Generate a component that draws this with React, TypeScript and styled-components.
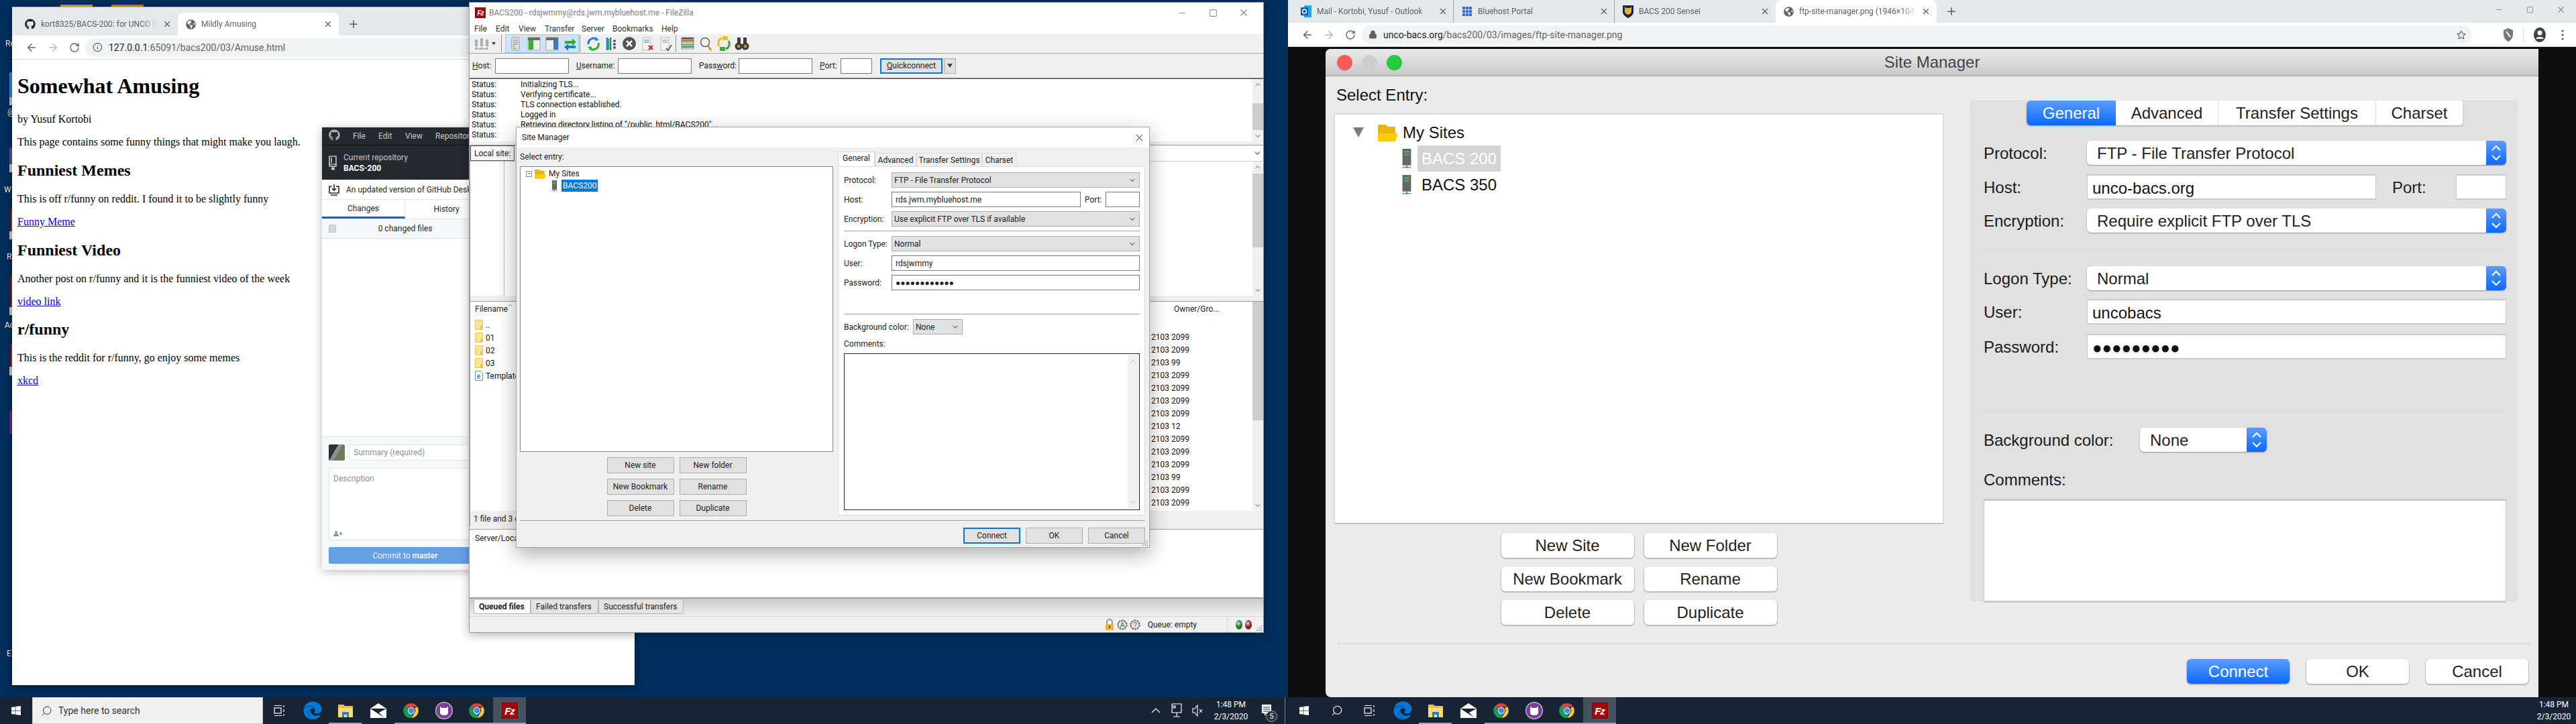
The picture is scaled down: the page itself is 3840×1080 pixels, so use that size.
import React from "react";
import styled, { createGlobalStyle } from "styled-components";
import { FaEdge, FaGithub, FaGlobeAmericas, FaWindows, FaRegStar } from "react-icons/fa";
import { ArrowLeft, ArrowRight, RotateCw, Info, Lock, Plus, X, Minus, Square, ChevronDown, ChevronUp, Search } from "lucide-react";

const UI = `"Roboto", "Liberation Sans", sans-serif`;
const MAC = `"Liberation Sans", Arial, sans-serif`;

const Global = createGlobalStyle`
  html, body { margin: 0; padding: 0; width: 3840px; height: 1080px; overflow: hidden; background: #002f5d; }
  #root { width: 3840px; height: 1080px; }
  * { box-sizing: border-box; }
`;

const Screens = styled.div`
  display: grid;
  grid-template-columns: 1920px 1920px;
  width: 3840px;
  height: 1080px;
  font-family: ${UI};
  font-size: 12px;
`;
const Monitor = styled.div`
  display: flex;
  flex-direction: column;
  height: 1080px;
  overflow: hidden;
`;
const Desktop = styled.div`
  position: relative;
  flex: 1;
  background: #002f5d;
  overflow: hidden;
`;
const DesktopGlyph = styled.div<{ $x: number; $y: number; $w: number; $h: number; $c: string }>`
  position: absolute;
  left: ${(p) => p.$x}px;
  top: ${(p) => p.$y}px;
  width: ${(p) => p.$w}px;
  height: ${(p) => p.$h}px;
  background: ${(p) => p.$c};
`;
const DesktopLabel = styled.div<{ $x: number; $y: number }>`
  position: absolute;
  left: ${(p) => p.$x}px;
  top: ${(p) => p.$y}px;
  color: #fff;
  font-size: 12px;
  line-height: 14px;
  text-shadow: 0 1px 2px #000;
`;

/* ---------- Chrome ---------- */
const FloatingWindow = styled.div<{ $x: number; $y: number; $w: number; $h: number }>`
  position: absolute;
  left: ${(p) => p.$x}px;
  top: ${(p) => p.$y}px;
  width: ${(p) => p.$w}px;
  height: ${(p) => p.$h}px;
  display: flex;
  flex-direction: column;
  overflow: hidden;
`;
const BrowserFrame = styled(FloatingWindow)`
  background: #fff;
  box-shadow: 0 2px 12px rgba(0, 0, 0, 0.45);
  border-top: 1px solid #b8bcc0;
`;
const TabStrip = styled.div<{ $h: number }>`
  display: flex;
  align-items: flex-end;
  flex: none;
  height: ${(p) => p.$h}px;
  padding-left: 7px;
  background: #e6e9ec;
`;
const BrowserTab = styled.div<{ $active?: boolean; $sep?: boolean }>`
  position: relative;
  display: flex;
  align-items: center;
  flex: none;
  width: 240px;
  height: 34px;
  padding: 0 8px 0 12px;
  gap: 8px;
  color: #5a5e63;
  font-size: 12px;
  background: ${(p) => (p.$active ? "#fff" : "transparent")};
  border-radius: ${(p) => (p.$active ? "8px 8px 0 0" : "0")};
  border-right: ${(p) => (p.$sep ? "1px solid #9da1a6" : "1px solid transparent")};
`;
const TabTitle = styled.span`
  flex: 1;
  min-width: 0;
  white-space: nowrap;
  overflow: hidden;
  -webkit-mask-image: linear-gradient(90deg, #000 88%, transparent);
  mask-image: linear-gradient(90deg, #000 88%, transparent);
`;
const TabClose = styled(X)`
  flex: none;
  width: 14px;
  height: 14px;
  color: #55595e;
`;
const NewTab = styled(Plus)`
  flex: none;
  width: 18px;
  height: 18px;
  margin: 0 0 8px 13px;
  color: #55595e;
`;
const NavBar = styled.div`
  display: flex;
  align-items: center;
  flex: none;
  height: 36px;
  padding-left: 13px;
  background: #fff;
  border-bottom: 1px solid #d4d6d8;
`;
const NavButton = styled.div<{ $off?: boolean }>`
  display: flex;
  align-items: center;
  justify-content: center;
  width: 32px;
  color: ${(p) => (p.$off ? "#b6b9bd" : "#5f6368")};
`;
const Omnibox = styled.div<{ $w: number }>`
  display: flex;
  align-items: center;
  width: ${(p) => p.$w}px;
  height: 28px;
  padding-left: 11px;
  gap: 9px;
  border-radius: 14px;
  background: #f1f3f4;
  font-size: 14px;
  color: #5f6368;
  white-space: nowrap;
`;
const UrlText = styled.span`
  flex: 1;
`;
const UrlStrong = styled.span`
  color: #202124;
`;
const OmniStar = styled(FaRegStar)`
  flex: none;
  margin-right: 9px;
`;
const NavRight = styled.div`
  display: flex;
  align-items: center;
  flex: 1;
  padding-left: 46px;
  color: #5f6368;
`;
const NavDivider = styled.div`
  flex: none;
  width: 1px;
  height: 24px;
  margin: 0 14px;
  background: #ddd;
`;
const NavDots = styled.svg`
  flex: none;
  margin-left: 22px;
`;
const PageContent = styled.div`
  flex: 1;
  padding: 0 8px;
  font-family: "Liberation Serif", "Times New Roman", serif;
  font-size: 16px;
  color: #000;
  background: #fff;
  display: flow-root;
`;
const H1 = styled.h1`
  font-size: 32px;
  margin: 21.44px 0;
`;
const H2 = styled.h2`
  font-size: 24px;
  margin: 19.92px 0;
`;
const Para = styled.p`
  margin: 16px 0;
`;
const PageLink = styled.a`
  color: #0000ee;
  text-decoration: underline;
`;

/* ---------- GitHub Desktop ---------- */
const GhFrame = styled(FloatingWindow)`
  background: #fff;
  box-shadow: 0 2px 14px rgba(0, 0, 0, 0.28);
`;
const GhTitle = styled.div`
  display: flex;
  align-items: center;
  flex: none;
  height: 27px;
  padding-left: 10px;
  background: #24292e;
  border-bottom: 1px solid #111;
  color: #c6cacf;
  white-space: nowrap;
`;
const GhMenu = styled.span<{ $w: number }>`
  flex: none;
  width: ${(p) => p.$w}px;
`;
const GhRepoBar = styled.div`
  display: flex;
  align-items: center;
  flex: none;
  height: 51px;
  padding-left: 10px;
  gap: 10px;
  background: #24292e;
  color: #fff;
`;
const GhRepoText = styled.div`
  display: flex;
  flex-direction: column;
  gap: 2px;
  line-height: 14px;
`;
const GhRepoCaption = styled.span`
  color: #c2c6cb;
`;
const GhBanner = styled.div`
  display: flex;
  align-items: center;
  flex: none;
  height: 30px;
  padding-left: 10px;
  gap: 10px;
  white-space: nowrap;
  color: #24292e;
  border-bottom: 1px solid #e1e4e8;
`;
const GhTabs = styled.div`
  display: grid;
  grid-template-columns: 124px 124px;
  flex: none;
  height: 29px;
  border-bottom: 1px solid #e1e4e8;
`;
const GhTab = styled.div<{ $active?: boolean }>`
  display: flex;
  align-items: center;
  justify-content: center;
  color: #24292e;
  border-right: 1px solid #e1e4e8;
  border-bottom: ${(p) => (p.$active ? "3px solid #0366d6" : "none")};
`;
const GhFilesRow = styled.div`
  display: flex;
  align-items: center;
  justify-content: center;
  position: relative;
  flex: none;
  height: 29px;
  background: #f6f8fa;
  color: #24292e;
  border-bottom: 1px solid #e1e4e8;
`;
const GhCheck = styled.div`
  position: absolute;
  left: 10px;
  top: 8px;
  width: 11px;
  height: 12px;
  border-radius: 2px;
  background: #d4d7da;
  border: 1px solid #bcc0c4;
`;
const GhBlank = styled.div`
  flex: 1;
`;
const GhCommit = styled.div`
  display: flex;
  flex-direction: column;
  flex: none;
  height: 199px;
  padding: 11px 10px;
  background: #f6f8fa;
  border-top: 1px solid #e1e4e8;
`;
const GhCommitTop = styled.div`
  display: flex;
  gap: 6px;
  height: 24px;
`;
const GhAvatar = styled.div`
  flex: none;
  width: 24px;
  height: 24px;
  border-radius: 2px;
  background: linear-gradient(120deg, #2b3138 0 38%, #8d8f8c 38% 55%, #6d7a5e 55% 100%);
`;
const GhSummary = styled.div`
  flex: 1;
  display: flex;
  align-items: center;
  padding-left: 6px;
  background: #fff;
  border: 1px solid #e1e4e8;
  border-radius: 3px;
  color: #8a9096;
  white-space: nowrap;
`;
const GhDescription = styled.div`
  display: flex;
  flex-direction: column;
  justify-content: space-between;
  flex: none;
  height: 108px;
  margin-top: 11px;
  padding: 8px 6px 5px;
  background: #fff;
  border: 1px solid #e1e4e8;
  border-radius: 3px;
  color: #8a9096;
`;
const GhCommitButton = styled.div`
  display: flex;
  align-items: center;
  justify-content: center;
  flex: none;
  height: 25px;
  margin-top: 10px;
  border-radius: 3px;
  background: #66a0e4;
  color: #e8f0fa;
`;

/* ---------- FileZilla ---------- */
const FzFrame = styled(FloatingWindow)`
  background: #f0f0f0;
  border: 1px solid #9a9a9a;
  box-shadow: 0 3px 14px rgba(0, 0, 0, 0.3);
`;
const FzTitle = styled.div`
  display: flex;
  align-items: center;
  flex: none;
  height: 30px;
  padding: 0 6px 0 8px;
  gap: 5px;
  background: #fff;
  color: #7d7d7d;
`;
const WindowButtons = styled.div`
  display: flex;
  margin-left: auto;
  color: #8e8e8e;
`;
const WindowButton = styled.div`
  display: flex;
  align-items: center;
  justify-content: center;
  width: 46px;
`;
const FzMenu = styled.div`
  display: flex;
  flex: none;
  height: 17px;
  padding-left: 7px;
  background: #fff;
  color: #333;
  align-items: center;
`;
const FzMenuItem = styled.span<{ $w: number }>`
  flex: none;
  width: ${(p) => p.$w}px;
`;
const FzToolbar = styled.div`
  display: flex;
  align-items: center;
  flex: none;
  height: 29px;
  padding-left: 5px;
  background: #f0f0f0;
  border-bottom: 1px solid #a0a0a0;
`;
const ToolButton = styled.div<{ $w?: number }>`
  display: flex;
  align-items: center;
  justify-content: center;
  flex: none;
  width: ${(p) => p.$w ?? 27}px;
  height: 26px;
`;
const ToggleGroup = styled.div`
  display: flex;
  flex: none;
  margin-left: 5px;
  background: #cce4f7;
  border: 1px solid #99ccee;
`;
const ToolSeparator = styled.div<{ $l: number; $r: number }>`
  flex: none;
  width: 1px;
  height: 26px;
  margin: 0 ${(p) => p.$r}px 0 ${(p) => p.$l}px;
  background: #8f8f8f;
`;
const DropArrow = styled.div`
  flex: none;
  width: 0;
  height: 0;
  border-left: 3px solid transparent;
  border-right: 3px solid transparent;
  border-top: 4px solid #333;
  margin: 0 8px 0 3px;
`;
const QuickBar = styled.div`
  display: flex;
  align-items: center;
  flex: none;
  height: 36px;
  padding-left: 4px;
  color: #222;
  font-size: 12px;
  white-space: nowrap;
`;
const QuickLabel = styled.span<{ $w: number }>`
  flex: none;
  width: ${(p) => p.$w}px;
`;
const Mnemonic = styled.span`
  text-decoration: underline;
`;
const QuickInput = styled.div<{ $w: number; $mr: number }>`
  flex: none;
  width: ${(p) => p.$w}px;
  height: 23px;
  margin-right: ${(p) => p.$mr}px;
  background: #fff;
  border: 1px solid #7a7a7a;
`;
const QuickConnect = styled.div`
  display: flex;
  align-items: center;
  justify-content: center;
  flex: none;
  width: 93px;
  height: 23px;
  background: #e1e1e1;
  border: 2px solid #0078d7;
`;
const QuickDrop = styled.div`
  display: flex;
  align-items: center;
  justify-content: center;
  flex: none;
  width: 18px;
  height: 23px;
  margin-left: 2px;
  background: #e1e1e1;
  border: 1px solid #adadad;
`;
const QuickTriangle = styled.div`
  width: 0;
  height: 0;
  border-left: 4px solid transparent;
  border-right: 4px solid transparent;
  border-top: 6px solid #444;
`;
const LogPane = styled.div`
  position: relative;
  flex: none;
  height: 95px;
  padding: 1px 0 0 3px;
  background: #fff;
  border-top: 2px solid #6d6d6d;
  color: #111;
`;
const LogRow = styled.div`
  display: flex;
  height: 15px;
  line-height: 15px;
  white-space: nowrap;
`;
const LogKey = styled.span`
  flex: none;
  width: 73px;
`;
const PaneScroll = styled.div`
  position: absolute;
  right: 0;
  top: 0;
  bottom: 0;
  width: 16px;
  display: flex;
  flex-direction: column;
  justify-content: space-between;
  align-items: center;
  padding: 2px 0;
  background: #f0f0f0;
  color: #555;
`;
const PaneThumb = styled.div<{ $t: number; $h: number }>`
  position: absolute;
  left: 0;
  right: 0;
  top: ${(p) => p.$t}px;
  height: ${(p) => p.$h}px;
  background: #cdcdcd;
`;
const Splitter = styled.div<{ $h: number }>`
  flex: none;
  height: ${(p) => p.$h}px;
  background: #f0f0f0;
  border-bottom: 1px solid #9b9b9b;
`;
const Panes = styled.div`
  display: grid;
  grid-template-columns: 590px 1fr;
  flex: none;
`;
const PaneColumn = styled.div`
  display: flex;
  flex-direction: column;
  min-width: 0;
  border-left: 1px solid #9b9b9b;
`;
const SiteBar = styled.div`
  display: flex;
  align-items: center;
  justify-content: space-between;
  flex: none;
  height: 24px;
  background: #fff;
  border-bottom: 1px solid #c9c9c9;
  color: #555;
`;
const SiteBarLabel = styled.div`
  display: flex;
  align-items: center;
  height: 100%;
  padding: 0 5px;
  border: 1px solid #5a5a5a;
  background: #f8f8f8;
  color: #222;
`;
const SiteBarChevron = styled(ChevronDown)`
  margin: 0 2px 0 auto;
`;
const TreePane = styled.div`
  position: relative;
  flex: none;
  height: 200px;
  background: #fff;
`;
const DottedLine = styled.div`
  position: absolute;
  left: 50px;
  top: 0;
  bottom: 0;
  border-left: 1px dotted #777;
`;
const ListPane = styled.div`
  position: relative;
  flex: none;
  height: 312px;
  background: #fff;
`;
const ListHeader = styled.div`
  position: relative;
  display: flex;
  align-items: center;
  height: 25px;
  padding: 0 0 3px 7px;
  color: #222;
`;
const SortMark = styled(ChevronUp)`
  position: absolute;
  left: 54px;
  top: 0;
  color: #888;
`;
const FileRow = styled.div`
  display: flex;
  align-items: center;
  height: 19px;
  padding-left: 7px;
  gap: 4px;
  white-space: nowrap;
  color: #111;
`;
const FolderIcon = styled.div`
  position: relative;
  flex: none;
  width: 12px;
  height: 15px;
  background: #fde48f;
  border: 1px solid #e9c65a;
  border-radius: 1px;
  &::after {
    content: "";
    position: absolute;
    right: 0;
    bottom: 0;
    width: 3px;
    height: 5px;
    background: #e9c65a;
  }
`;
const RemoteHeader = styled.div`
  height: 25px;
  padding: 4px 0 0 459px;
  color: #222;
  white-space: nowrap;
`;
const RemoteRow = styled.div`
  height: 19px;
  line-height: 19px;
  padding-left: 425px;
  color: #111;
  white-space: nowrap;
`;
const PaneStatus = styled.div`
  display: flex;
  align-items: center;
  flex: none;
  height: 23px;
  padding-left: 5px;
  background: #f0f0f0;
  color: #222;
  white-space: nowrap;
`;
const QueuePane = styled.div`
  flex: none;
  height: 103px;
  padding: 6px 8px;
  background: #fff;
  color: #222;
  border-bottom: 2px solid #a0a0a0;
`;
const QueueTabs = styled.div`
  display: flex;
  flex: none;
  height: 27px;
  padding: 2px 0 0 6px;
  background: linear-gradient(#c9c9c9, #f0f0f0);
  border-bottom: 1px solid #d7d7d7;
`;
const QueueTab = styled.div<{ $w: number; $active?: boolean }>`
  display: flex;
  align-items: center;
  flex: none;
  width: ${(p) => p.$w}px;
  height: 21px;
  padding-left: 7px;
  border: 1px solid #b4b4b4;
  border-top: none;
  border-radius: 0 0 3px 3px;
  background: ${(p) => (p.$active ? "#fff" : "#e4e4e4")};
  font-weight: ${(p) => (p.$active ? 700 : 400)};
  color: #222;
`;
const FzStatus = styled.div`
  display: flex;
  align-items: center;
  justify-content: flex-end;
  flex: 1;
  min-height: 0;
  padding-right: 16px;
  gap: 3px;
  color: #222;
`;
const QueueText = styled.span`
  margin-left: 8px;
`;
const StatusDivider = styled.div`
  flex: none;
  width: 1px;
  height: 22px;
  margin: 0 9px 0 42px;
  background: #d5d5d5;
`;
const Light = styled.div<{ $c: string }>`
  flex: none;
  width: 10px;
  height: 14px;
  margin-right: 1px;
  border-radius: 50%;
  background: radial-gradient(circle at 40% 35%, #ddd, ${(p) => p.$c} 45%);
`;
const Grip = styled.svg`
  position: absolute;
  right: 1px;
  bottom: 1px;
`;

/* ---------- Site Manager (Windows) ---------- */
const Dialog = styled(FloatingWindow)`
  background: #f0f0f0;
  border: 1px solid #a6a6a6;
  box-shadow: 0 10px 28px rgba(0, 0, 0, 0.32);
`;
const DialogTitle = styled.div`
  display: flex;
  align-items: center;
  justify-content: space-between;
  flex: none;
  height: 30px;
  padding: 0 6px 0 8px;
  background: #fff;
  color: #222;
`;
const DialogColumns = styled.div`
  display: flex;
  flex: none;
  height: 556px;
  padding: 0 6px 0 5px;
  gap: 7px;
`;
const EntryColumn = styled.div`
  display: flex;
  flex-direction: column;
  flex: none;
  width: 467px;
`;
const EntryLabel = styled.div`
  display: flex;
  align-items: center;
  flex: none;
  height: 28px;
  color: #222;
`;
const EntryTree = styled.div`
  flex: none;
  height: 426px;
  padding: 1px 0 0 8px;
  background: #fff;
  border: 1px solid #828790;
`;
const TreeNode = styled.div<{ $indent: number }>`
  display: flex;
  align-items: center;
  height: 18px;
  padding-left: ${(p) => p.$indent}px;
  gap: 4px;
  color: #222;
`;
const MinusBox = styled.div`
  display: flex;
  align-items: center;
  justify-content: center;
  flex: none;
  width: 9px;
  height: 9px;
  border: 1px solid #8d8d8d;
  background: #fff;
  font-size: 9px;
  line-height: 1;
`;
const NodeSelected = styled.span`
  display: flex;
  align-items: center;
  height: 18px;
  margin-left: 2px;
  padding: 0 2px;
  background: #0078d7;
  color: #fff;
`;
const EntryButtons = styled.div`
  display: grid;
  grid-template-columns: 100px 100px;
  grid-auto-rows: 24px;
  gap: 8px;
  justify-content: center;
  margin-top: 8px;
`;
const WinButton = styled.div<{ $focus?: boolean }>`
  display: flex;
  align-items: center;
  justify-content: center;
  height: 24px;
  background: #e1e1e1;
  border: ${(p) => (p.$focus ? "2px solid #0078d7" : "1px solid #adadad")};
  color: #222;
`;
const TabColumn = styled.div`
  display: flex;
  flex-direction: column;
  flex: none;
  width: 458px;
  padding-top: 6px;
`;
const WinTabs = styled.div`
  display: flex;
  align-items: flex-end;
  flex: none;
  height: 22px;
`;
const WinTab = styled.div<{ $w: number; $active?: boolean }>`
  display: flex;
  align-items: center;
  justify-content: center;
  flex: none;
  width: ${(p) => p.$w}px;
  height: ${(p) => (p.$active ? 22 : 20)}px;
  background: ${(p) => (p.$active ? "#fff" : "#f0f0f0")};
  border: 1px solid #d9d9d9;
  border-bottom: none;
  color: #222;
  ${(p) => (p.$active ? "padding-bottom: 3px;" : "")}
`;
const WinPanel = styled.div`
  flex: none;
  height: 521px;
  padding: 8px 7px 0 8px;
  background: #fff;
  border: 1px solid #d9d9d9;
`;
const FormRow = styled.div<{ $gap?: number }>`
  display: flex;
  align-items: center;
  height: 23px;
  margin-top: ${(p) => p.$gap ?? 6}px;
`;
const FormLabel = styled.span<{ $w?: number }>`
  flex: none;
  width: ${(p) => p.$w ?? 71}px;
  color: #222;
`;
const WinCombo = styled.div<{ $w?: number }>`
  display: flex;
  align-items: center;
  justify-content: space-between;
  flex: ${(p) => (p.$w ? "none" : "1")};
  ${(p) => (p.$w ? `width: ${p.$w}px;` : "")}
  height: 23px;
  padding: 0 4px 0 3px;
  background: #e1e1e1;
  border: 1px solid #adadad;
  color: #222;
`;
const WinInput = styled.div<{ $w?: number }>`
  display: flex;
  align-items: center;
  flex: ${(p) => (p.$w ? "none" : "1")};
  ${(p) => (p.$w ? `width: ${p.$w}px;` : "")}
  height: 23px;
  padding-left: 5px;
  background: #fff;
  border: 1px solid #7a7a7a;
  color: #222;
`;
const PortLabel = styled.span`
  flex: none;
  width: 31px;
  margin-left: 6px;
  color: #222;
`;
const WinRule = styled.div<{ $t: number; $b: number }>`
  height: 1px;
  margin: ${(p) => p.$t}px 0 ${(p) => p.$b}px;
  background: #a0a0a0;
`;
const CommentsLabel = styled.div`
  height: 14px;
  line-height: 14px;
  margin-top: 7px;
  color: #222;
`;
const CommentsBox = styled.div`
  position: relative;
  height: 234px;
  margin-top: 7px;
  background: #fff;
  border: 1px solid #222;
`;
const CommentScroll = styled.div`
  position: absolute;
  right: 1px;
  top: 1px;
  bottom: 1px;
  width: 16px;
  display: flex;
  flex-direction: column;
  justify-content: space-between;
  align-items: center;
  padding: 4px 0;
  background: #f0f0f0;
  color: #bbb;
`;
const DialogRule = styled.div`
  flex: none;
  height: 1px;
  margin: 0 6px 0 5px;
  background: #a0a0a0;
`;
const DialogFooter = styled.div`
  display: flex;
  justify-content: flex-end;
  flex: none;
  gap: 8px;
  padding: 10px 6px 0 0;
`;
const FooterButton = styled(WinButton)`
  width: 85px;
  height: 24px;
`;

/* ---------- Taskbar ---------- */
const TaskbarRoot = styled.div`
  display: flex;
  align-items: stretch;
  flex: none;
  height: 40px;
  background: #182434;
  color: #fff;
`;
const StartSlot = styled.div`
  display: flex;
  align-items: center;
  justify-content: center;
  flex: none;
  width: 48px;
`;
const SearchBox = styled.div`
  display: flex;
  align-items: center;
  flex: none;
  width: 344px;
  padding-left: 12px;
  gap: 9px;
  background: #f0f0f0;
  border: 1px solid #c9c9c9;
  color: #333;
  font-size: 14px;
`;
const SearchGlyph = styled(Search)`
  flex: none;
  transform: scaleX(-1);
`;
const TaskSlot = styled.div<{ $running?: boolean; $active?: boolean }>`
  display: flex;
  align-items: center;
  justify-content: center;
  flex: none;
  width: 49px;
  background: ${(p) => (p.$active ? "#46525f" : "transparent")};
  border-bottom: 2px solid ${(p) => (p.$running ? "#6cb0ec" : "transparent")};
  padding-top: 2px;
`;
const Tray = styled.div`
  display: flex;
  align-items: center;
  margin-left: auto;
`;
const TrayIcon = styled.div`
  display: flex;
  align-items: center;
  justify-content: center;
  flex: none;
  width: 31px;
`;
const Clock = styled.div<{ $w: number }>`
  display: flex;
  flex-direction: column;
  align-items: center;
  flex: none;
  width: ${(p) => p.$w}px;
  gap: 4px;
  font-size: 12px;
  line-height: 14px;
`;
const NoticeSlot = styled.div`
  position: relative;
  display: flex;
  justify-content: center;
  flex: none;
  width: 35px;
`;
const NoticeBadge = styled.div`
  position: absolute;
  left: 17px;
  top: 9px;
  width: 17px;
  height: 17px;
  line-height: 15px;
  border-radius: 50%;
  background: #2b3440;
  border: 1px solid #9da4ad;
  text-align: center;
  font-size: 11px;
`;
const ShowDesktop = styled.div`
  flex: none;
  width: 15px;
  height: 100%;
  background: linear-gradient(90deg, transparent 10px, #76808c 10px 11px, transparent 11px);
`;
const TrayEnd = styled.div`
  flex: none;
  width: 5px;
`;
const FzBadge = styled.div<{ $s: number }>`
  display: flex;
  align-items: center;
  justify-content: center;
  flex: none;
  width: ${(p) => p.$s}px;
  height: ${(p) => p.$s}px;
  background: #a00a0a;
  color: #fff;
  font-family: ${MAC};
  font-weight: 700;
  font-style: italic;
  font-size: ${(p) => Math.round(p.$s * 0.62)}px;
  letter-spacing: -1px;
  border: 1px dotted #5d0000;
`;

/* ---------- Maximised Chrome + mac picture ---------- */
const MaxBrowser = styled.div`
  display: flex;
  flex-direction: column;
  flex: 1;
  min-height: 0;
`;
const WindowControls = styled.div`
  display: flex;
  align-items: flex-start;
  margin-left: auto;
  height: 34px;
  color: #8c8f93;
`;
const WindowControl = styled.div`
  display: flex;
  align-items: center;
  justify-content: center;
  width: 46px;
  height: 28px;
`;
const ImageStage = styled.div`
  display: flex;
  justify-content: center;
  flex: 1;
  padding-top: 3px;
  background: #0e0e0e;
  min-height: 0;
`;
const MacWindow = styled.div`
  display: flex;
  flex-direction: column;
  flex: none;
  width: 1808px;
  background: #ebebeb;
  border-radius: 8px 0 0 8px;
  overflow: hidden;
  font-family: ${MAC};
  color: #222;
`;
const MacTitle = styled.div`
  position: relative;
  display: flex;
  align-items: center;
  justify-content: center;
  flex: none;
  height: 41px;
  background: linear-gradient(#ebebeb, #c9c9c9);
  border-bottom: 2px solid #b4b4b4;
  color: #444;
  font-size: 24px;
`;
const Lights = styled.div`
  position: absolute;
  left: 17px;
  top: 9px;
  display: flex;
  gap: 14px;
`;
const MacLight = styled.div<{ $c: string }>`
  width: 23px;
  height: 23px;
  border-radius: 50%;
  background: ${(p) => p.$c};
`;
const MacColumns = styled.div`
  display: flex;
  flex: none;
  height: 818px;
  padding-left: 12px;
  gap: 39px;
`;
const MacLeft = styled.div`
  display: flex;
  flex-direction: column;
  flex: none;
  width: 910px;
`;
const MacSelectLabel = styled.div`
  display: flex;
  align-items: center;
  flex: none;
  height: 55px;
  padding-left: 4px;
  font-size: 24px;
  color: #111;
`;
const MacTree = styled.div`
  flex: none;
  height: 613px;
  padding: 7px 0 0 27px;
  background: #fff;
  border: 2px solid #dcdcdc;
  border-bottom-color: #c4c4c4;
`;
const MacNode = styled.div<{ $indent: number }>`
  display: flex;
  align-items: center;
  height: 39px;
  padding-left: ${(p) => p.$indent}px;
  font-size: 24px;
  color: #111;
`;
const MacTriangle = styled.div`
  flex: none;
  width: 0;
  height: 0;
  margin-right: 21px;
  border-left: 8px solid transparent;
  border-right: 8px solid transparent;
  border-top: 15px solid #7c7c7c;
`;
const MacSelected = styled.div`
  display: flex;
  align-items: center;
  height: 39px;
  margin-left: 8px;
  padding: 0 6px;
  background: #d4d4d4;
  color: #fff;
`;
const MacPlain = styled.div`
  display: flex;
  align-items: center;
  padding: 0 7px;
`;
const MacPlainIndented = styled(MacPlain)`
  margin-left: 7px;
`;
const MacButtons = styled.div`
  display: grid;
  grid-template-columns: 198px 198px;
  grid-auto-rows: 37px;
  column-gap: 15px;
  row-gap: 13px;
  justify-content: center;
  margin-top: 13px;
`;
const MacButton = styled.div<{ $w?: number; $primary?: boolean }>`
  display: flex;
  align-items: center;
  justify-content: center;
  ${(p) => (p.$w ? `width: ${p.$w}px;` : "")}
  height: 37px;
  font-size: 24px;
  border-radius: 6px;
  background: ${(p) => (p.$primary ? "linear-gradient(#5c9cff, #0a69ff)" : "#fff")};
  color: ${(p) => (p.$primary ? "#fff" : "#222")};
  box-shadow: 0 1px 1px 1px rgba(0, 0, 0, 0.2);
`;
const MacRight = styled.div`
  flex: none;
  width: 816px;
  padding-top: 54px;
`;
const MacPanel = styled.div`
  height: 747px;
  padding: 0 17px 0 20px;
  background: #e1e1e1;
  border-radius: 6px;
  box-shadow: inset 0 0 0 1px #dcdcdc;
`;
const MacTabs = styled.div`
  position: relative;
  display: flex;
  width: 651px;
  height: 37px;
  margin: -18px auto 0;
  font-size: 24px;
  background: #fff;
  border-radius: 6px;
  box-shadow: 0 1px 2px rgba(0, 0, 0, 0.3);
  overflow: hidden;
`;
const MacTab = styled.div<{ $w: number; $active?: boolean }>`
  display: flex;
  align-items: center;
  justify-content: center;
  flex: none;
  width: ${(p) => p.$w}px;
  background: ${(p) => (p.$active ? "linear-gradient(#5c9cff, #0a69ff)" : "#fff")};
  color: ${(p) => (p.$active ? "#fff" : "#222")};
  border-right: ${(p) => (p.$active ? "none" : "1px solid #dcdcdc")};
`;
const MacRow = styled.div<{ $top: number; $h: number }>`
  display: flex;
  align-items: center;
  height: ${(p) => p.$h}px;
  margin-top: ${(p) => p.$top}px;
  font-size: 24px;
`;
const MacLabel = styled.span<{ $w?: number }>`
  flex: none;
  width: ${(p) => p.$w ?? 154}px;
  padding-top: 2px;
  color: #1a1a1a;
`;
const MacSelect = styled.div<{ $w?: number }>`
  position: relative;
  display: flex;
  align-items: center;
  flex: ${(p) => (p.$w ? "none" : "1")};
  ${(p) => (p.$w ? `width: ${p.$w}px;` : "")}
  height: 36px;
  padding: 2px 0 0 15px;
  background: #fff;
  border-radius: 6px;
  box-shadow: 0 1px 2px rgba(0, 0, 0, 0.35);
  overflow: hidden;
`;
const MacStepper = styled.div`
  position: absolute;
  right: 0;
  top: 0;
  bottom: 0;
  width: 30px;
  display: flex;
  align-items: center;
  justify-content: center;
  background: linear-gradient(#5c9cff, #0a69ff);
`;
const MacInput = styled.div<{ $w?: number }>`
  display: flex;
  align-items: center;
  flex: ${(p) => (p.$w ? "none" : "1")};
  ${(p) => (p.$w ? `width: ${p.$w}px;` : "")}
  height: 38px;
  padding: 3px 0 0 7px;
  background: #fff;
  border: 2px solid #cbcbcb;
  border-left-width: 1px;
  border-right-width: 1px;
  font-size: 24px;
  color: #111;
`;
const MacPortLabel = styled.span`
  flex: none;
  width: 95px;
  margin-left: 24px;
  padding-top: 2px;
`;
const MacRule = styled.div<{ $top: number }>`
  height: 4px;
  margin: ${(p) => p.$top}px 3px 0 1px;
  background: #dbdbdb;
`;
const MacTextArea = styled.div`
  height: 155px;
  margin-top: 15px;
  background: #fff;
  border: 2px solid #cbcbcb;
  border-width: 3px 1px;
`;
const MacFooterRule = styled.div`
  flex: none;
  height: 4px;
  margin: 26px 12px 0 17px;
  background: #e2e2e2;
`;
const MacFooter = styled.div`
  display: flex;
  justify-content: flex-end;
  flex: none;
  gap: 25px;
  margin-top: 21px;
  padding-right: 15px;
`;

/* ---------- Drawn icons ---------- */
const ChromeLogo = ({ s = 26 }: { s?: number }) => (
  <svg width={s} height={s} viewBox="0 0 48 48">
    <path d="M24 4a20 20 0 0 1 17.3 10H24a10 10 0 0 0-9.5 7L8 10.2A20 20 0 0 1 24 4z" fill="#db4437" />
    <path d="M41.3 14A20 20 0 0 1 25 44l8.3-14.5A10 10 0 0 0 33 17z" fill="#fcc934" />
    <path d="M25 44A20 20 0 0 1 8 10.2l8.2 14.4A10 10 0 0 0 27.5 33.4z" fill="#0f9d58" />
    <circle cx="24" cy="24" r="8.5" fill="#4285f4" stroke="#fff" strokeWidth="2" />
  </svg>
);
const ExplorerLogo = () => (
  <svg width="24" height="24" viewBox="0 0 24 24">
    <path d="M1 3h8l2 2h12v17H1z" fill="#f2bc3d" />
    <path d="M1 8h22v14H1z" fill="#fbdc76" />
    <path d="M7 14h10v8h-3v-4h-4v4H7z" fill="#2a7fd1" />
  </svg>
);
const MailLogo = () => (
  <svg width="26" height="26" viewBox="0 0 26 26">
    <path d="M1 10 13 2l12 8v14H1z" fill="#fff" />
    <path d="M1 10l24 0-11 6 7 7z" fill="#182434" />
  </svg>
);
const GhDesktopLogo = () => (
  <svg width="26" height="26" viewBox="0 0 26 26">
    <circle cx="13" cy="13" r="12.4" fill="#7d3c98" stroke="#c9c9d2" strokeWidth="1.2" />
    <path d="M7 7l3 2h6l3-2v9c0 3-3 4-6 4s-6-1-6-4z" fill="#fff" />
  </svg>
);
const TaskViewGlyph = () => (
  <svg width="18" height="18" viewBox="0 0 18 18" fill="none" stroke="#fff" strokeWidth="1.2">
    <path d="M1 1.5h11M1 16.5h11" />
    <rect x="1" y="5" width="10" height="8" />
    <path d="M15 1v3M15 7v4M15 14v3" />
  </svg>
);
const ServerGlyph = ({ w, h }: { w: number; h: number }) => (
  <svg width={w} height={h} viewBox="0 0 14 28">
    <rect x="1" y="0" width="12" height="23" fill="#666" />
    <rect x="3.5" y="3" width="7" height="2" fill="#4bbb55" />
    <rect x="3.5" y="7" width="7" height="2" fill="#4bbb55" />
    <rect x="6" y="23" width="2" height="4" fill="#888" />
    <rect x="1" y="25" width="12" height="1.5" fill="#3b97e0" />
  </svg>
);
const FolderGlyph = ({ w, h }: { w: number; h: number }) => (
  <svg width={w} height={h} viewBox="0 0 30 26">
    <path d="M0 1h12l3 3h11v20H0z" fill="#e9b60b" />
    <path d="M0 14h30l-4 12H0z" fill="#ffcc0d" />
  </svg>
);
const HtmlDocGlyph = () => (
  <svg width="12" height="15" viewBox="0 0 12 15">
    <path d="M0.5 0.5h8l3 3v11h-11z" fill="#fff" stroke="#7f8a99" />
    <text x="5.5" y="11.5" textAnchor="middle" fontSize="10" fontWeight="700" fontFamily="Liberation Sans" fill="#1a7fd6">e</text>
  </svg>
);
const Stepper = () => (
  <svg width="16" height="28" viewBox="0 0 16 28" fill="none" stroke="#fff" strokeWidth="2">
    <path d="M2 10l6-6 6 6M2 18l6 6 6-6" />
  </svg>
);
const Octo = ({ s, c }: { s: number; c: string }) => <FaGithub size={s} color={c} />;

const GripDots = () => (
  <Grip width="10" height="10" viewBox="0 0 10 10" fill="#b4b4b4">
    <rect x="7" y="1" width="2" height="2" />
    <rect x="4" y="4" width="2" height="2" />
    <rect x="7" y="4" width="2" height="2" />
    <rect x="1" y="7" width="2" height="2" />
    <rect x="4" y="7" width="2" height="2" />
    <rect x="7" y="7" width="2" height="2" />
  </Grip>
);

const tb = { width: 22, height: 24, viewBox: "0 0 22 24" };
const TSite = () => (
  <svg {...tb}>
    <path d="M1 20h20M3 20v-3M11 20v-3M19 20v-3" stroke="#777" />
    <rect x="1" y="6" width="4" height="10" fill="#9cb3c4" />
    <rect x="9" y="4" width="4" height="12" fill="#aab9a6" />
    <rect x="17" y="6" width="4" height="10" fill="#9cb3c4" />
  </svg>
);
const TLog = () => (
  <svg {...tb}>
    <rect x="6" y="3" width="11" height="19" rx="1" fill="#e4e4e4" stroke="#999" />
    <path d="M8 7h7M8 10h7M8 13h7" stroke="#6a7b6a" />
    <path d="M8 16h3M8 19h5" stroke="#3cab3c" />
  </svg>
);
const TPane = ({ a, l }: { a: string; l: boolean }) => (
  <svg {...tb}>
    <rect x="3" y="3" width="18" height="19" fill="#eef1ee" stroke="#aaa" />
    <rect x="3" y="3" width="18" height="4" fill="#6a6a6a" />
    <rect x={l ? 4 : 14} y="7" width="7" height="14" fill={a} />
  </svg>
);
const TArrows = () => (
  <svg {...tb}>
    <path d="M4 8h11V4l6 6-6 5v-3H4z" fill="#29b32c" />
    <path d="M20 15H9v-3l-6 5 6 6v-4h11z" fill="#1f7dd1" />
  </svg>
);
const TReload = () => (
  <svg {...tb} fill="none" strokeWidth="3">
    <path d="M4 13A8 8 0 0 1 17 6" stroke="#2a7fd1" />
    <path d="M19 11A8 8 0 0 1 6 19" stroke="#29b32c" />
    <path d="M15 2l5 5-6 1z" fill="#2a7fd1" />
    <path d="M8 22l-5-5 6-1z" fill="#29b32c" />
  </svg>
);
const TFilter = () => (
  <svg {...tb}>
    <path d="M5 3v19M10 3v19" stroke="#1f7dd1" strokeWidth="2.5" />
    <path d="M7 5v16" stroke="#29b32c" strokeWidth="2" />
    <circle cx="16" cy="8" r="2" fill="#555" />
    <circle cx="16" cy="13" r="2" fill="#555" />
    <circle cx="16" cy="18" r="2" fill="#555" />
  </svg>
);
const TCancel = () => (
  <svg {...tb}>
    <circle cx="11" cy="12" r="10" fill="#555" />
    <path d="M7 8l8 8M15 8l-8 8" stroke="#fff" strokeWidth="2.5" />
  </svg>
);
const TDoc = ({ red }: { red: boolean }) => (
  <svg {...tb}>
    <rect x="4" y="3" width="12" height="19" fill="#f5f5f5" stroke="#bbb" />
    <path d="M6 7h8M6 10h8" stroke={red ? "#2a7fd1" : "#888"} />
    {red ? (
      <path d="M13 15l6 6M19 15l-6 6" stroke="#c4231c" strokeWidth="2" />
    ) : (
      <path d="M12 19l3 3 5-8" stroke="#666" strokeWidth="2" fill="none" />
    )}
  </svg>
);
const TTable = () => (
  <svg {...tb}>
    <rect x="2" y="3" width="18" height="3" fill="#555" />
    <path d="M2 8h18" stroke="#d23a2f" strokeWidth="2" />
    <path d="M2 11h18" stroke="#e0a82e" strokeWidth="2" />
    <path d="M2 14h18" stroke="#3cab3c" strokeWidth="2" />
    <path d="M2 17h18" stroke="#1f7dd1" strokeWidth="2" />
    <rect x="2" y="3" width="18" height="17" fill="none" stroke="#888" />
  </svg>
);
const TSearch = () => (
  <svg {...tb} fill="none">
    <circle cx="10" cy="10" r="6.5" stroke="#666" strokeWidth="1.5" />
    <path d="M14 15l5 7" stroke="#d9862a" strokeWidth="2.5" />
  </svg>
);
const TSync = () => (
  <svg {...tb} fill="none" strokeWidth="3">
    <path d="M4 16a8 8 0 0 1 4-12" stroke="#e8c21e" />
    <path d="M18 8a8 8 0 0 1-4 12" stroke="#3cab3c" />
    <rect x="9" y="1" width="8" height="6" fill="#e8c21e" stroke="none" />
    <rect x="5" y="17" width="8" height="6" fill="#3cab3c" stroke="none" />
  </svg>
);
const TBinoc = () => (
  <svg {...tb}>
    <rect x="4" y="3" width="5" height="8" fill="#3a3a3a" />
    <rect x="13" y="3" width="5" height="8" fill="#3a3a3a" />
    <circle cx="6" cy="16" r="5.5" fill="#3a3a3a" />
    <circle cx="16" cy="16" r="5.5" fill="#3a3a3a" />
    <circle cx="6" cy="16" r="2.5" fill="#b98d2f" />
    <circle cx="16" cy="16" r="2.5" fill="#b98d2f" />
  </svg>
);
const OutlookIcon = () => (
  <svg width="16" height="18" viewBox="0 0 16 18">
    <rect x="5" y="0" width="11" height="18" fill="#28a8ea" />
    <rect x="0" y="3" width="11" height="12" fill="#0a5fb0" />
    <circle cx="5.5" cy="9" r="3" fill="none" stroke="#fff" strokeWidth="1.5" />
  </svg>
);
const GridIcon = () => (
  <svg width="16" height="16" viewBox="0 0 16 16" fill="#2d6cdf">
    {[0, 1, 2].flatMap((r) =>
      [0, 1, 2].map((c) => <rect key={`${r}${c}`} x={1 + c * 5} y={1 + r * 5} width="4" height="4" />)
    )}
  </svg>
);
const SenseiIcon = () => (
  <svg width="16" height="20" viewBox="0 0 16 20">
    <path d="M0 1h16v10c0 4-4 7-8 9-4-2-8-5-8-9z" fill="#13294b" />
    <path d="M3 3l2 2h6l2-2v7c0 2-2 4-5 5-3-1-5-3-5-5z" fill="#e8b32a" />
  </svg>
);
const LockGlyph = () => (
  <svg width="16" height="17" viewBox="0 0 16 17">
    <path d="M4 8V5a4 4 0 0 1 8 0v3" fill="none" stroke="#999" strokeWidth="2" />
    <rect x="2" y="8" width="12" height="9" rx="1" fill="#f0b429" />
    <rect x="7" y="10" width="2" height="4" fill="#7a5a00" />
  </svg>
);
const GearGlyph = ({ t }: { t: string }) => (
  <svg width="16" height="16" viewBox="0 0 16 16">
    <circle cx="8" cy="8" r="6.5" fill="#e8e8e8" stroke="#666" strokeWidth="2" strokeDasharray="3 1" />
    <text x="8" y="11.5" textAnchor="middle" fontSize="10" fontFamily="Liberation Sans" fill={t === "A" ? "#2a8a2a" : "#666"}>
      {t}
    </text>
  </svg>
);

/* ---------- Sub-assemblies ---------- */
const TaskIcons = () => (
  <>
    <TaskSlot><FaEdge size={28} color="#0078d7" /></TaskSlot>
    <TaskSlot $running><ExplorerLogo /></TaskSlot>
    <TaskSlot><MailLogo /></TaskSlot>
    <TaskSlot $running><ChromeLogo /></TaskSlot>
    <TaskSlot $running><GhDesktopLogo /></TaskSlot>
    <TaskSlot $running><ChromeLogo /></TaskSlot>
    <TaskSlot $running $active><FzBadge $s={24}>Fz</FzBadge></TaskSlot>
  </>
);
const desktopBits = [
  { x: 90, y: 7, w: 48, h: 3, c: "#e0b400" },
  { x: 166, y: 7, w: 48, h: 3, c: "#e08a10" },
  { x: 14, y: 108, w: 4, h: 37, c: "#2f86e4" },
  { x: 14, y: 145, w: 4, h: 12, c: "#c8c8c8" },
  { x: 14, y: 220, w: 4, h: 32, c: "#54509a" },
  { x: 14, y: 245, w: 4, h: 12, c: "#d0d0d0" },
  { x: 16, y: 312, w: 2, h: 33, c: "#c2201c" },
  { x: 14, y: 345, w: 4, h: 12, c: "#d0d0d0" },
  { x: 16, y: 412, w: 2, h: 46, c: "#c2201c" },
  { x: 14, y: 458, w: 4, h: 12, c: "#d0d0d0" },
  { x: 16, y: 513, w: 2, h: 34, c: "#c2201c" },
  { x: 14, y: 547, w: 4, h: 13, c: "#d0d0d0" },
  { x: 14, y: 613, w: 4, h: 34, c: "#6a2a7a" }
];
const desktopLabels = [
  { x: 8, y: 58, t: "Re" },
  { x: 11, y: 160, t: "@" },
  { x: 6, y: 276, t: "W" },
  { x: 10, y: 376, t: "R" },
  { x: 7, y: 478, t: "Ad" },
  { x: 10, y: 968, t: "E" }
];
const logLines = [
  "Initializing TLS...",
  "Verifying certificate...",
  "TLS connection established.",
  "Logged in",
  'Retrieving directory listing of "/public_html/BACS200"...',
  ""
];
const groups = ["2099", "2099", "99", "2099", "2099", "2099", "2099", "12", "2099", "2099", "2099", "99", "2099", "2099"];

export default function App() {
  return (
    <>
      <Global />
      <Screens>
        <Monitor>
          <Desktop>
            {desktopBits.map((b, i) => (
              <DesktopGlyph key={i} $x={b.x} $y={b.y} $w={b.w} $h={b.h} $c={b.c} />
            ))}
            {desktopLabels.map((l) => (
              <DesktopLabel key={l.t} $x={l.x} $y={l.y}>{l.t}</DesktopLabel>
            ))}

            <BrowserFrame $x={18} $y={10} $w={928} $h={1012}>
              <TabStrip $h={42}>
                <BrowserTab>
                  <Octo s={16} c="#222" />
                  <TabTitle>kort8325/BACS-200: for UNCO BACS 200</TabTitle>
                  <TabClose />
                </BrowserTab>
                <BrowserTab $active>
                  <FaGlobeAmericas size={15} color="#5f6368" />
                  <TabTitle>Mildly Amusing</TabTitle>
                  <TabClose />
                </BrowserTab>
                <NewTab />
              </TabStrip>
              <NavBar>
                <NavButton><ArrowLeft size={18} /></NavButton>
                <NavButton $off><ArrowRight size={18} /></NavButton>
                <NavButton><RotateCw size={16} /></NavButton>
                <Omnibox $w={800}>
                  <Info size={15} />
                  <UrlText><UrlStrong>127.0.0.1</UrlStrong>:65091/bacs200/03/Amuse.html</UrlText>
                </Omnibox>
              </NavBar>
              <PageContent>
                <H1>Somewhat Amusing</H1>
                <Para>by Yusuf Kortobi</Para>
                <Para>This page contains some funny things that might make you laugh.</Para>
                <H2>Funniest Memes</H2>
                <Para>This is off r/funny on reddit. I found it to be slightly funny</Para>
                <Para><PageLink href="#">Funny Meme</PageLink></Para>
                <H2>Funniest Video</H2>
                <Para>Another post on r/funny and it is the funniest video of the week</Para>
                <Para><PageLink href="#">video link</PageLink></Para>
                <H2>r/funny</H2>
                <Para>This is the reddit for r/funny, go enjoy some memes</Para>
                <Para><PageLink href="#">xkcd</PageLink></Para>
              </PageContent>
            </BrowserFrame>

            <GhFrame $x={480} $y={190} $w={248} $h={660}>
              <GhTitle>
                <GhMenu $w={36}><Octo s={17} c="#a7abb0" /></GhMenu>
                <GhMenu $w={38}>File</GhMenu>
                <GhMenu $w={40}>Edit</GhMenu>
                <GhMenu $w={45}>View</GhMenu>
                <GhMenu $w={70}>Repository</GhMenu>
              </GhTitle>
              <GhRepoBar>
                <svg width="12" height="22" viewBox="0 0 12 22" fill="none" stroke="#fff" strokeWidth="1.2">
                  <path d="M1 1h10v15H1zM1 13h10M4 3v8M5 16v5l1.5-1.5L8 21v-5" />
                </svg>
                <GhRepoText>
                  <GhRepoCaption>Current repository</GhRepoCaption>
                  <strong>BACS-200</strong>
                </GhRepoText>
              </GhRepoBar>
              <GhBanner>
                <svg width="16" height="18" viewBox="0 0 16 18" fill="none" stroke="#24292e" strokeWidth="1.6">
                  <path d="M5 4H1v10h14V4h-4M8 1v9M5 7l3 3 3-3M3 17h10" />
                </svg>
                An updated version of GitHub Desktop
              </GhBanner>
              <GhTabs>
                <GhTab $active>Changes</GhTab>
                <GhTab>History</GhTab>
              </GhTabs>
              <GhFilesRow>
                <GhCheck />
                0 changed files
              </GhFilesRow>
              <GhBlank />
              <GhCommit>
                <GhCommitTop>
                  <GhAvatar />
                  <GhSummary>Summary (required)</GhSummary>
                </GhCommitTop>
                <GhDescription>
                  Description
                  <svg width="13" height="8" viewBox="0 0 13 8" fill="#8a9096">
                    <circle cx="4" cy="2" r="2" />
                    <path d="M0 8c0-3 2-4 4-4s4 1 4 4zM9 3h1.5V1.5H12V3h1v1.5h-1V6h-1.5V4.5H9z" />
                  </svg>
                </GhDescription>
                <GhCommitButton><span>Commit to <b>master</b></span></GhCommitButton>
              </GhCommit>
            </GhFrame>

            <FzFrame $x={699} $y={3} $w={1185} $h={941}>
              <FzTitle>
                <FzBadge $s={16}>Fz</FzBadge>
                BACS200 - rdsjwmmy@rds.jwm.mybluehost.me - FileZilla
                <WindowButtons>
                  <WindowButton><Minus size={13} /></WindowButton>
                  <WindowButton><Square size={13} /></WindowButton>
                  <WindowButton><X size={16} /></WindowButton>
                </WindowButtons>
              </FzTitle>
              <FzMenu>
                <FzMenuItem $w={32}>File</FzMenuItem>
                <FzMenuItem $w={34}>Edit</FzMenuItem>
                <FzMenuItem $w={39}>View</FzMenuItem>
                <FzMenuItem $w={55}>Transfer</FzMenuItem>
                <FzMenuItem $w={46}>Server</FzMenuItem>
                <FzMenuItem $w={73}>Bookmarks</FzMenuItem>
                <FzMenuItem $w={40}>Help</FzMenuItem>
              </FzMenu>
              <FzToolbar>
                <ToolButton $w={25}><TSite /></ToolButton>
                <DropArrow />
                <ToolSeparator $l={0} $r={0} />
                <ToggleGroup>
                  <ToolButton><TLog /></ToolButton>
                  <ToolButton><TPane a="#3cab3c" l /></ToolButton>
                  <ToolButton><TPane a="#2a7fd1" l={false} /></ToolButton>
                  <ToolButton><TArrows /></ToolButton>
                </ToggleGroup>
                <ToolSeparator $l={1} $r={5} />
                <ToolButton><TReload /></ToolButton>
                <ToolButton><TFilter /></ToolButton>
                <ToolButton><TCancel /></ToolButton>
                <ToolButton><TDoc red /></ToolButton>
                <ToolButton><TDoc red={false} /></ToolButton>
                <ToolSeparator $l={2} $r={3} />
                <ToolButton><TTable /></ToolButton>
                <ToolButton><TSearch /></ToolButton>
                <ToolButton><TSync /></ToolButton>
                <ToolButton><TBinoc /></ToolButton>
              </FzToolbar>
              <QuickBar>
                <QuickLabel $w={34}><Mnemonic>H</Mnemonic>ost:</QuickLabel>
                <QuickInput $w={110} $mr={11} />
                <QuickLabel $w={62}><Mnemonic>U</Mnemonic>sername:</QuickLabel>
                <QuickInput $w={110} $mr={11} />
                <QuickLabel $w={59}>Pass<Mnemonic>w</Mnemonic>ord:</QuickLabel>
                <QuickInput $w={110} $mr={11} />
                <QuickLabel $w={31}><Mnemonic>P</Mnemonic>ort:</QuickLabel>
                <QuickInput $w={47} $mr={12} />
                <QuickConnect><span><Mnemonic>Q</Mnemonic>uickconnect</span></QuickConnect>
                <QuickDrop><QuickTriangle /></QuickDrop>
              </QuickBar>
              <LogPane>
                {logLines.map((l, i) => (
                  <LogRow key={i}><LogKey>Status:</LogKey>{l}</LogRow>
                ))}
                <PaneScroll>
                  <PaneThumb $t={36} $h={40} />
                  <ChevronUp size={12} />
                  <ChevronDown size={12} />
                </PaneScroll>
              </LogPane>
              <Splitter $h={6} />
              <Panes>
                <PaneColumn>
                  <SiteBar><SiteBarLabel>Local site:</SiteBarLabel></SiteBar>
                  <TreePane><DottedLine /></TreePane>
                  <Splitter $h={9} />
                  <ListPane>
                    <ListHeader>Filename<SortMark size={11} /></ListHeader>
                    <FileRow><FolderIcon />..</FileRow>
                    <FileRow><FolderIcon />01</FileRow>
                    <FileRow><FolderIcon />02</FileRow>
                    <FileRow><FolderIcon />03</FileRow>
                    <FileRow><HtmlDocGlyph />Template.html</FileRow>
                  </ListPane>
                  <PaneStatus>1 file and 3 directories.</PaneStatus>
                </PaneColumn>
                <PaneColumn>
                  <SiteBar><SiteBarChevron size={13} /></SiteBar>
                  <TreePane>
                    <PaneScroll>
                      <PaneThumb $t={18} $h={110} />
                      <ChevronUp size={12} />
                      <ChevronDown size={12} />
                    </PaneScroll>
                  </TreePane>
                  <Splitter $h={9} />
                  <ListPane>
                    <RemoteHeader>Owner/Gro...</RemoteHeader>
                    <RemoteRow />
                    {groups.map((g, i) => (
                      <RemoteRow key={i}>2103 {g}</RemoteRow>
                    ))}
                    <PaneScroll>
                      <PaneThumb $t={0} $h={177} />
                      <span />
                      <ChevronDown size={12} />
                    </PaneScroll>
                  </ListPane>
                  <PaneStatus />
                </PaneColumn>
              </Panes>
              <Splitter $h={5} />
              <QueuePane>Server/Local file</QueuePane>
              <QueueTabs>
                <QueueTab $w={85} $active>Queued files</QueueTab>
                <QueueTab $w={101}>Failed transfers</QueueTab>
                <QueueTab $w={127}>Successful transfers</QueueTab>
              </QueueTabs>
              <FzStatus>
                <LockGlyph />
                <GearGlyph t="A" />
                <GearGlyph t="?" />
                <QueueText>Queue: empty</QueueText>
                <StatusDivider />
                <Light $c="#1e7e2a" />
                <Light $c="#8a1f24" />
                <GripDots />
              </FzStatus>
            </FzFrame>

            <Dialog $x={769} $y={189} $w={945} $h={628}>
              <DialogTitle>
                Site Manager
                <X size={17} color="#222" strokeWidth={1.4} />
              </DialogTitle>
              <DialogColumns>
                <EntryColumn>
                  <EntryLabel>Select entry:</EntryLabel>
                  <EntryTree>
                    <TreeNode $indent={0}>
                      <MinusBox>−</MinusBox>
                      <FolderGlyph w={17} h={15} />
                      My Sites
                    </TreeNode>
                    <TreeNode $indent={38}>
                      <ServerGlyph w={9} h={17} />
                      <NodeSelected>BACS200</NodeSelected>
                    </TreeNode>
                  </EntryTree>
                  <EntryButtons>
                    <WinButton>New site</WinButton>
                    <WinButton>New folder</WinButton>
                    <WinButton>New Bookmark</WinButton>
                    <WinButton>Rename</WinButton>
                    <WinButton>Delete</WinButton>
                    <WinButton>Duplicate</WinButton>
                  </EntryButtons>
                </EntryColumn>
                <TabColumn>
                  <WinTabs>
                    <WinTab $w={55} $active>General</WinTab>
                    <WinTab $w={62}>Advanced</WinTab>
                    <WinTab $w={98}>Transfer Settings</WinTab>
                    <WinTab $w={51}>Charset</WinTab>
                  </WinTabs>
                  <WinPanel>
                    <FormRow $gap={0}>
                      <FormLabel>Protocol:</FormLabel>
                      <WinCombo>FTP - File Transfer Protocol<ChevronDown size={12} /></WinCombo>
                    </FormRow>
                    <FormRow>
                      <FormLabel>Host:</FormLabel>
                      <WinInput $w={282}>rds.jwm.mybluehost.me</WinInput>
                      <PortLabel>Port:</PortLabel>
                      <WinInput />
                    </FormRow>
                    <FormRow>
                      <FormLabel>Encryption:</FormLabel>
                      <WinCombo>Use explicit FTP over TLS if available<ChevronDown size={12} /></WinCombo>
                    </FormRow>
                    <WinRule $t={6} $b={7} />
                    <FormRow $gap={0}>
                      <FormLabel>Logon Type:</FormLabel>
                      <WinCombo>Normal<ChevronDown size={12} /></WinCombo>
                    </FormRow>
                    <FormRow>
                      <FormLabel>User:</FormLabel>
                      <WinInput>rdsjwmmy</WinInput>
                    </FormRow>
                    <FormRow>
                      <FormLabel>Password:</FormLabel>
                      <WinInput>●●●●●●●●●●●●</WinInput>
                    </FormRow>
                    <WinRule $t={35} $b={7} />
                    <FormRow $gap={0}>
                      <FormLabel $w={103}>Background color:</FormLabel>
                      <WinCombo $w={74}>None<ChevronDown size={12} /></WinCombo>
                    </FormRow>
                    <CommentsLabel>Comments:</CommentsLabel>
                    <CommentsBox>
                      <CommentScroll>
                        <ChevronUp size={12} />
                        <ChevronDown size={12} />
                      </CommentScroll>
                    </CommentsBox>
                  </WinPanel>
                </TabColumn>
              </DialogColumns>
              <DialogRule />
              <DialogFooter>
                <FooterButton $focus>Connect</FooterButton>
                <FooterButton>OK</FooterButton>
                <FooterButton>Cancel</FooterButton>
              </DialogFooter>
              <GripDots />
            </Dialog>
          </Desktop>
          <TaskbarRoot>
            <StartSlot><FaWindows size={16} color="#fff" /></StartSlot>
            <SearchBox>
              <SearchGlyph size={17} color="#333" strokeWidth={1.4} />
              Type here to search
            </SearchBox>
            <TaskSlot><TaskViewGlyph /></TaskSlot>
            <TaskIcons />
            <Tray>
              <TrayIcon><svg width="14" height="8" viewBox="0 0 14 8" fill="none" stroke="#fff" strokeWidth="1.2"><path d="M1 7l6-6 6 6" /></svg></TrayIcon>
              <TrayIcon><svg width="16" height="22" viewBox="0 0 16 22" fill="none" stroke="#fff" strokeWidth="1.2"><path d="M1 1h14v13H1zM8 14v6M3 20h10M3 4h3v3H3z" /></svg></TrayIcon>
              <TrayIcon><svg width="16" height="20" viewBox="0 0 16 20" fill="none" stroke="#fff" strokeWidth="1.1"><path d="M1 7h3l4-5v16l-4-5H1zM11 8l4 5M15 8l-4 5" /></svg></TrayIcon>
              <Clock $w={70}><span>1:48 PM</span><span>2/3/2020</span></Clock>
              <NoticeSlot>
                <svg width="14" height="18" viewBox="0 0 14 18" fill="#fff"><path d="M0 0h14v13H7l-3 4v-4H0z" /><path d="M2 4h10M2 7h10M2 10h10" stroke="#182434" /></svg>
                <NoticeBadge>5</NoticeBadge>
              </NoticeSlot>
              <ShowDesktop />
            </Tray>
          </TaskbarRoot>
        </Monitor>

        <Monitor>
          <MaxBrowser>
            <TabStrip $h={34}>
              <BrowserTab $sep>
                <OutlookIcon />
                <TabTitle>Mail - Kortobi, Yusuf - Outlook</TabTitle>
                <TabClose />
              </BrowserTab>
              <BrowserTab $sep>
                <GridIcon />
                <TabTitle>Bluehost Portal</TabTitle>
                <TabClose />
              </BrowserTab>
              <BrowserTab>
                <SenseiIcon />
                <TabTitle>BACS 200 Sensei</TabTitle>
                <TabClose />
              </BrowserTab>
              <BrowserTab $active>
                <FaGlobeAmericas size={15} color="#5f6368" />
                <TabTitle>ftp-site-manager.png (1946×1042)</TabTitle>
                <TabClose />
              </BrowserTab>
              <NewTab />
              <WindowControls>
                <WindowControl><Minus size={13} /></WindowControl>
                <WindowControl><Square size={11} /></WindowControl>
                <WindowControl><X size={15} /></WindowControl>
              </WindowControls>
            </TabStrip>
            <NavBar>
              <NavButton><ArrowLeft size={18} /></NavButton>
              <NavButton $off><ArrowRight size={18} /></NavButton>
              <NavButton><RotateCw size={16} /></NavButton>
              <Omnibox $w={1656}>
                <Lock size={13} fill="#5f6368" />
                <UrlText><UrlStrong>unco-bacs.org</UrlStrong>/bacs200/03/images/ftp-site-manager.png</UrlText>
                <OmniStar size={14} />
              </Omnibox>
              <NavRight>
                <svg width="16" height="20" viewBox="0 0 16 20" fill="#777"><path d="M8 0l7 3v6c0 5-3 9-7 11-4-2-7-6-7-11V3z" /><path d="M5 5l6 8" stroke="#fff" strokeWidth="2" /></svg>
                <NavDivider />
                <svg width="20" height="24" viewBox="0 0 20 24" fill="#444"><ellipse cx="10" cy="12" rx="9" ry="11" /><circle cx="10" cy="9" r="3.5" fill="#fff" /><path d="M4 18c1-4 11-4 12 0z" fill="#fff" /></svg>
                <NavDots width="4" height="18" viewBox="0 0 4 18" fill="#555"><circle cx="2" cy="3" r="1.6" /><circle cx="2" cy="9" r="1.6" /><circle cx="2" cy="15" r="1.6" /></NavDots>
              </NavRight>
            </NavBar>
            <ImageStage>
              <MacWindow>
                <MacTitle>
                  <Lights>
                    <MacLight $c="#fc5b57" />
                    <MacLight $c="#cdcdcd" />
                    <MacLight $c="#27c93f" />
                  </Lights>
                  Site Manager
                </MacTitle>
                <MacColumns>
                  <MacLeft>
                    <MacSelectLabel>Select Entry:</MacSelectLabel>
                    <MacTree>
                      <MacNode $indent={0}>
                        <MacTriangle />
                        <FolderGlyph w={30} h={26} />
                        <MacPlain>My Sites</MacPlain>
                      </MacNode>
                      <MacNode $indent={72}>
                        <ServerGlyph w={16} h={30} />
                        <MacSelected>BACS 200</MacSelected>
                      </MacNode>
                      <MacNode $indent={72}>
                        <ServerGlyph w={16} h={30} />
                        <MacPlainIndented>BACS 350</MacPlainIndented>
                      </MacNode>
                    </MacTree>
                    <MacButtons>
                      <MacButton>New Site</MacButton>
                      <MacButton>New Folder</MacButton>
                      <MacButton>New Bookmark</MacButton>
                      <MacButton>Rename</MacButton>
                      <MacButton>Delete</MacButton>
                      <MacButton>Duplicate</MacButton>
                    </MacButtons>
                  </MacLeft>
                  <MacRight>
                    <MacPanel>
                      <MacTabs>
                        <MacTab $w={133} $active>General</MacTab>
                        <MacTab $w={153}>Advanced</MacTab>
                        <MacTab $w={235}>Transfer Settings</MacTab>
                        <MacTab $w={130}>Charset</MacTab>
                      </MacTabs>
                      <MacRow $top={23} $h={36}>
                        <MacLabel>Protocol:</MacLabel>
                        <MacSelect>FTP - File Transfer Protocol<MacStepper><Stepper /></MacStepper></MacSelect>
                      </MacRow>
                      <MacRow $top={14} $h={38}>
                        <MacLabel>Host:</MacLabel>
                        <MacInput $w={431}>unco-bacs.org</MacInput>
                        <MacPortLabel>Port:</MacPortLabel>
                        <MacInput />
                      </MacRow>
                      <MacRow $top={13} $h={36}>
                        <MacLabel>Encryption:</MacLabel>
                        <MacSelect>Require explicit FTP over TLS<MacStepper><Stepper /></MacStepper></MacSelect>
                      </MacRow>
                      <MacRule $top={23} />
                      <MacRow $top={23} $h={36}>
                        <MacLabel>Logon Type:</MacLabel>
                        <MacSelect>Normal<MacStepper><Stepper /></MacStepper></MacSelect>
                      </MacRow>
                      <MacRow $top={13} $h={38}>
                        <MacLabel>User:</MacLabel>
                        <MacInput>uncobacs</MacInput>
                      </MacRow>
                      <MacRow $top={14} $h={38}>
                        <MacLabel>Password:</MacLabel>
                        <MacInput>●●●●●●●●●</MacInput>
                      </MacRow>
                      <MacRule $top={76} />
                      <MacRow $top={21} $h={37}>
                        <MacLabel $w={233}>Background color:</MacLabel>
                        <MacSelect $w={189}>None<MacStepper><Stepper /></MacStepper></MacSelect>
                      </MacRow>
                      <MacRow $top={27} $h={28}>
                        <MacLabel>Comments:</MacLabel>
                      </MacRow>
                      <MacTextArea />
                    </MacPanel>
                  </MacRight>
                </MacColumns>
                <MacFooterRule />
                <MacFooter>
                  <MacButton $w={153} $primary>Connect</MacButton>
                  <MacButton $w={153}>OK</MacButton>
                  <MacButton $w={153}>Cancel</MacButton>
                </MacFooter>
              </MacWindow>
            </ImageStage>
          </MaxBrowser>
          <TaskbarRoot>
            <StartSlot><FaWindows size={16} color="#fff" /></StartSlot>
            <TaskSlot><SearchGlyph size={18} color="#fff" strokeWidth={1.4} /></TaskSlot>
            <TaskSlot><TaskViewGlyph /></TaskSlot>
            <TaskIcons />
            <Tray>
              <Clock $w={56}><span>1:48 PM</span><span>2/3/2020</span></Clock>
              <TrayEnd />
            </Tray>
          </TaskbarRoot>
        </Monitor>
      </Screens>
    </>
  );
}
